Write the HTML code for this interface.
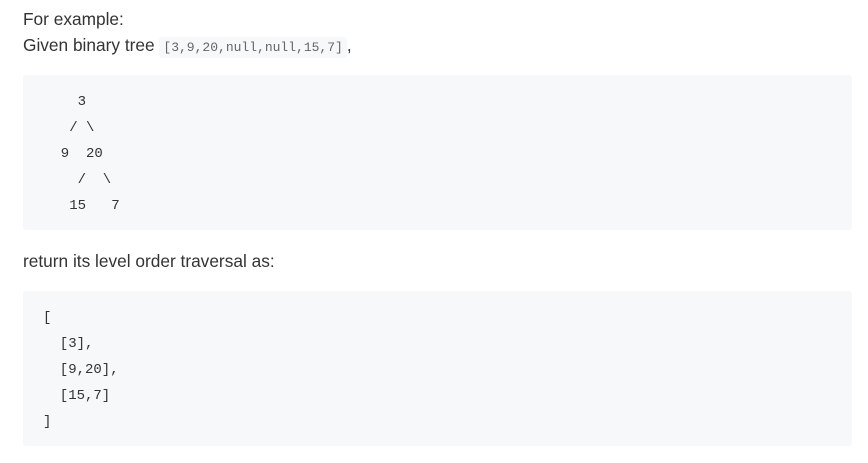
<!DOCTYPE html>
<html><head><meta charset="utf-8"><style>
body{margin:0;background:#fff;width:868px;height:463px;overflow:hidden;font-family:"Liberation Sans",sans-serif;color:#333;}
.t{position:absolute;left:23px;font-size:17.3px;line-height:20px;}
code{font-family:"Liberation Mono",monospace;font-size:13px;color:#666;background:#f6f8fa;padding:3px 4px;border-radius:3px;}
pre{position:absolute;left:23px;width:829px;margin:0;background:#f6f8fa;border-radius:3px;box-sizing:border-box;padding:14px 20px 0 21px;font-family:"Liberation Mono",monospace;font-size:14px;line-height:26px;color:#333;}
</style></head><body>
<div class="t" style="top:9px">For example:</div>
<div class="t" style="top:35px">Given binary tree <code>[3,9,20,null,null,15,7]</code>,</div>
<pre style="top:75px;height:155px">    3
   / \
  9  20
    /  \
   15   7</pre>
<div class="t" style="top:251px">return its level order traversal as:</div>
<pre style="top:291px;height:155px;padding-left:20px">[
  [3],
  [9,20],
  [15,7]
]</pre>
</body></html>
